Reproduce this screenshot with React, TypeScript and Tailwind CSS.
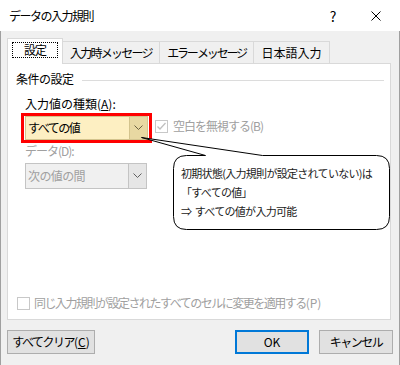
import React from "react";

const Chevron = ({ color = "#606060" }: { color?: string }) => (
  <svg width="9" height="6" viewBox="0 0 9 6">
    <polyline points="0.5,0.5 4.5,4.5 8.5,0.5" fill="none" stroke={color} strokeWidth="1" />
  </svg>
);

const DisabledCheck = ({ checked }: { checked: boolean }) => (
  <svg width="13" height="13" viewBox="0 0 13 13" className="shrink-0">
    <rect x="0.5" y="0.5" width="12" height="12" fill="#ffffff" stroke="#c8c8c8" />
    {checked && (
      <polyline points="2.5,6.5 5,9 10.5,3" fill="none" stroke="#c0c0c0" strokeWidth="1.3" />
    )}
  </svg>
);

export default function App() {
  return (
    <div className="w-[400px] h-[365px] flex flex-col overflow-hidden font-['Noto_Sans_CJK_JP','Noto_Sans',sans-serif] text-[12px] leading-[16px] text-[#000]">
      {/* Title bar */}
      <div className="h-[31px] bg-white flex items-center shrink-0">
        <span className="ml-[9px] tracking-[-1.5px]">データの入力規則</span>
        <span className="ml-auto text-[14px] w-[10px] text-center">?</span>
        <svg width="10" height="10" viewBox="0 0 10 10" className="ml-[33px] mr-[19px]">
          <line x1="0.5" y1="0.5" x2="9.5" y2="9.5" stroke="#000" strokeWidth="1" />
          <line x1="9.5" y1="0.5" x2="0.5" y2="9.5" stroke="#000" strokeWidth="1" />
        </svg>
      </div>

      {/* Body */}
      <div className="flex-1 bg-[#f0f0f0] border-x border-[#a0a0a0] flex flex-col">
        {/* Tabs */}
        <div className="flex items-end ml-[6px] mt-[7px] h-[25px]">
          <div className="relative z-10 w-[56px] h-[26px] -mb-px bg-white border border-b-0 border-[#d9d9d9] flex justify-center pt-[3px]">
            <span className="w-[46px] h-[16px] border border-dotted border-black flex items-center justify-center tracking-[-1px]">
              設定
            </span>
          </div>
          <div className="w-[97px] h-[22px] border-t border-r border-[#d9d9d9] flex items-center justify-center tracking-[-1.75px]">
            入力時メッセージ
          </div>
          <div className="w-[94px] h-[22px] border-t border-r border-[#d9d9d9] flex items-center justify-center tracking-[-2.2px]">
            エラー メッセージ
          </div>
          <div className="w-[76px] h-[22px] border-t border-r border-[#d9d9d9] flex items-center justify-center">
            日本語入力
          </div>
        </div>

        {/* Panel */}
        <div className="relative ml-[6px] w-[384px] h-[257px] bg-white border border-[#d9d9d9] flex flex-col">
          {/* Group heading */}
          <div className="flex items-start mt-[7px] pl-[8px] pr-[6px]">
            <span className="tracking-[-0.5px]">条件の設定</span>
            <div className="flex-1 h-px bg-[#dcdcdc] mt-[9px] ml-[8px]" />
          </div>

          <div className="mt-[9px] pl-[17px]">
            入力値の種類(<span className="underline">A</span>):
          </div>

          <div className="flex items-start pl-[17px] mt-[4px]">
            <div className="relative w-[123px] h-[24px] bg-[#fdefc2] border border-[#d3c38d] flex">
              <span className="flex-1 pl-[2px] flex items-center tracking-[-1.5px]">すべての値</span>
              <div className="w-[18px] h-full bg-[#e8d8a2] border-l border-[#d3c38d] flex items-center justify-center">
                <Chevron color="#6a6040" />
              </div>
              {/* red highlight */}
              <div className="absolute -left-[5px] -top-[4px] -right-[5px] -bottom-[4px] border-[3px] border-[#ff0000]" />
            </div>
            <div className="flex items-center ml-[7px] mt-[2px]">
              <DisabledCheck checked />
              <span className="ml-[5px] text-[#a0a0a0] tracking-[-1px]">空白を無視する(B)</span>
            </div>
          </div>

          <div className="mt-[3px] pl-[17px] text-[#a0a0a0] tracking-[-1px]">データ(D):</div>

          <div className="pl-[17px] mt-[4px]">
            <div className="w-[122px] h-[26px] bg-[#f0f0f0] border border-[#c4c4c4] flex">
              <span className="flex-1 pl-[2px] flex items-center text-[#a0a0a0] tracking-[-0.6px]">次の値の間</span>
              <div className="w-[18px] h-full bg-[#e6e6e6] border-l border-[#c4c4c4] flex items-center justify-center">
                <Chevron />
              </div>
            </div>
          </div>

          <div className="mt-auto mb-[8px] pl-[9px] flex items-center">
            <DisabledCheck checked={false} />
            <span className="ml-[4px] text-[#a0a0a0]">
              <span className="tracking-[-1.5px]">同じ入力規則が設定されたすべてのセルに変更を適用する</span>
              <span>(P)</span>
            </span>
          </div>

          {/* Callout annotation */}
          <div className="absolute left-[130px] top-[68px] w-[254px] h-[100px]">
            <svg width="254" height="100" viewBox="0 0 254 100" className="absolute left-0 top-0">
              <path
                d="M 48.5,23.5 L 67.5,23.5 L 3.5,5.5 L 124.5,23.5 L 238.5,23.5 Q 251.5,23.5 251.5,36.5 L 251.5,84.5 Q 251.5,97.5 238.5,97.5 L 48.5,97.5 Q 35.5,97.5 35.5,84.5 L 35.5,36.5 Q 35.5,23.5 48.5,23.5 Z"
                fill="#ffffff"
                stroke="#000000"
                strokeWidth="1"
              />
            </svg>
            <div className="absolute left-[43px] top-[32px] text-[11px] leading-[19px] text-[#222] tracking-[-0.7px]">
              <div>初期状態(入力規則が設定されていない)は</div>
              <div>「すべての値」</div>
              <div>⇒&nbsp; すべての値が入力可能</div>
            </div>
          </div>
        </div>

        {/* Buttons */}
        <div className="flex items-center mt-[10px] ml-[6px] mr-[6px] gap-[10px]">
          <button className="w-[88px] h-[24px] bg-[#e1e1e1] border border-[#adadad] flex items-center justify-center">
            <span>
              <span className="tracking-[-1.5px]">すべてクリア</span>
              <span>(<span className="underline">C</span>)</span>
            </span>
          </button>
          <button className="ml-auto w-[74px] h-[24px] bg-[#e1e1e1] border-2 border-[#0078d7] flex items-center justify-center">
            OK
          </button>
          <button className="w-[74px] h-[24px] bg-[#e1e1e1] border border-[#adadad] flex items-center justify-center tracking-[-1.5px]">
            キャンセル
          </button>
        </div>
      </div>
    </div>
  );
}
